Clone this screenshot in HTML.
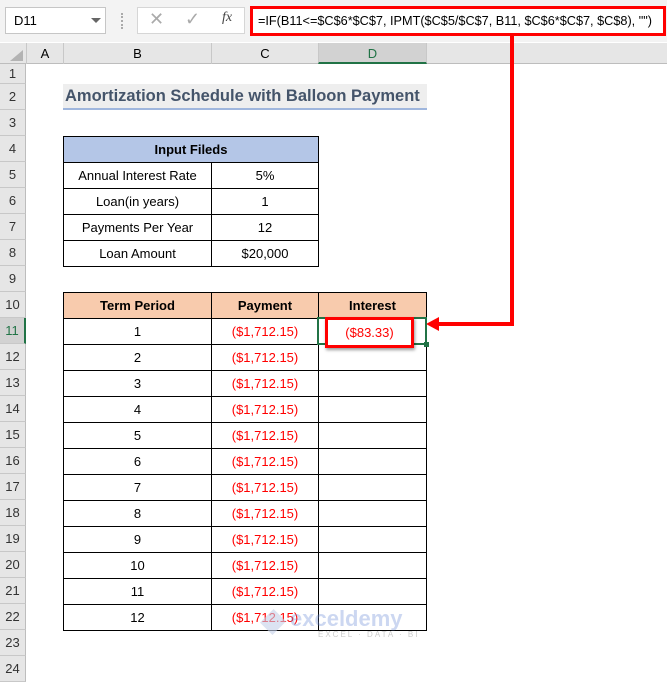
<!DOCTYPE html><html><head><style>
body{margin:0;width:667px;height:656px;background:#fff;position:relative;overflow:hidden;font-family:"Liberation Sans",sans-serif;font-size:13px;color:#000}
.a{position:absolute;box-sizing:border-box}
.rh{position:absolute;left:0;width:26px;background:#e6e6e6;border-bottom:1px solid #c8c8c8;border-right:1px solid #bdbdbd;text-align:center;font-size:13px;color:#333;box-sizing:border-box}
.c{position:absolute;box-sizing:border-box;border:1px solid #000;text-align:center;font-size:13px}
.red{color:#ff0000}
</style></head><body>
<div class="a" style="left:0;top:0;width:667px;height:42px;background:#f3f3f3"></div>
<div class="a" style="left:5px;top:7px;width:101px;height:27px;background:#fff;border:1px solid #c6c6c6;padding:5px 0 0 8px;font-size:13px">D11</div>
<div class="a" style="left:91px;top:18px;border-left:5px solid transparent;border-right:5px solid transparent;border-top:5px solid #666"></div>
<div class="a" style="left:121px;top:13px;width:2px;height:16px;border-left:2px dotted #aaa"></div>
<div class="a" style="left:137px;top:7px;width:108px;height:27px;background:#fff;border:1px solid #d6d6d6"></div>
<div class="a" style="left:149px;top:9px;font-size:18px;color:#aaa">✕</div>
<div class="a" style="left:185px;top:9px;font-size:18px;color:#aaa">✓</div>
<div class="a" style="left:222px;top:10px;font-size:14px;font-style:italic;font-family:'Liberation Serif',serif;color:#444">fx</div>
<div class="a" style="left:250px;top:6px;width:416px;height:30px;background:#fff;border:3px solid #ff0000;padding:5px 0 0 5px;font-size:12.7px;white-space:nowrap;overflow:hidden">=IF(B11&lt;=$C$6*$C$7, IPMT($C$5/$C$7, B11, $C$6*$C$7, $C$8), "")</div>
<div class="a" style="left:0;top:43px;width:667px;height:21px;background:#e6e6e6;border-bottom:1px solid #bdbdbd"></div>
<div class="a" style="left:10px;top:50px;border-left:13px solid transparent;border-bottom:11px solid #b3b3b3"></div>
<div class="a" style="left:26px;top:43px;width:37px;height:21px;border-left:1px solid #c8c8c8;text-align:center;padding-top:3px">A</div>
<div class="a" style="left:63px;top:43px;width:148px;height:21px;border-left:1px solid #c8c8c8;text-align:center;padding-top:3px">B</div>
<div class="a" style="left:211px;top:43px;width:107px;height:21px;border-left:1px solid #c8c8c8;text-align:center;padding-top:3px">C</div>
<div class="a" style="left:318px;top:43px;width:109px;height:21px;border-left:1px solid #c8c8c8;border-right:1px solid #c8c8c8;background:#d2d2d2;border-bottom:2px solid #217346;text-align:center;padding-top:3px;color:#217346">D</div>
<div class="a" style="left:0;top:64px;width:26px;height:592px;background:#e6e6e6;border-right:1px solid #bdbdbd"></div>
<div class="rh" style="top:64px;height:20px;line-height:20px">1</div>
<div id="rows"></div>
<div class="a" style="left:63px;top:84px;width:364px;height:26px;background:#eeeeee;border-bottom:2px solid #9fb6dd;color:#44546a;font-weight:bold;font-size:16.5px;padding:3px 0 0 2px">Amortization Schedule with Balloon Payment</div>
<div id="t"></div>
<div class="a" style="left:510px;top:36px;width:4px;height:290px;background:#ff0000"></div>
<div class="a" style="left:436px;top:322px;width:78px;height:4px;background:#ff0000"></div>
<div class="a" style="left:426px;top:317px;border-top:7px solid transparent;border-bottom:7px solid transparent;border-right:13px solid #ff0000"></div>
<div class="a" style="left:317px;top:317px;width:110px;height:28px;border:2px solid #217346"></div>
<div class="a" style="left:424px;top:342px;width:5px;height:5px;background:#217346"></div>
<div class="a" style="left:325px;top:317px;width:89px;height:31px;border:3px solid #ff0000;box-shadow:1px 2px 3px rgba(0,0,0,.4);background:#fff;text-align:center;padding-top:5px;color:#ff0000">($83.33)</div>
<div class="a" style="left:262px;top:610px;width:22px;height:24px;background:#c5d0ea;opacity:.6;transform:rotate(45deg) scale(.8)"></div>
<div class="a" style="left:290px;top:606px;opacity:.35;color:#6f8fd8;font-weight:bold;font-size:22px;white-space:nowrap">exceldemy</div>
<div class="a" style="left:318px;top:630px;opacity:.5;color:#999;font-size:8px;letter-spacing:2px;white-space:nowrap">EXCEL · DATA · BI</div>
<script>
let h='';for(let k=2;k<=24;k++){let t=84+(k-2)*26;h+=`<div class="rh" style="top:${t}px;height:26px;line-height:26px;${k==11?'background:#d2d2d2;color:#217346;border-right:2px solid #217346':''}">${k}</div>`}
document.getElementById('rows').innerHTML=h;
let s='';const T=k=>84+(k-2)*26;
const inp=[["Annual Interest Rate","5%"],["Loan(in years)","1"],["Payments Per Year","12"],["Loan Amount","$20,000"]];
s+=`<div class="c" style="left:63px;top:${T(4)}px;width:256px;height:27px;background:#b4c6e7;font-weight:bold;line-height:25px">Input Fileds</div>`;
inp.forEach((r,i)=>{let t=T(5+i);s+=`<div class="c" style="left:63px;top:${t}px;width:149px;height:27px;line-height:25px">${r[0]}</div><div class="c" style="left:211px;top:${t}px;width:108px;height:27px;line-height:25px">${r[1]}</div>`});
let t=T(10);s+=`<div class="c" style="left:63px;top:${t}px;width:149px;height:27px;line-height:25px;background:#f8cbad;font-weight:bold">Term Period</div><div class="c" style="left:211px;top:${t}px;width:108px;height:27px;line-height:25px;background:#f8cbad;font-weight:bold">Payment</div><div class="c" style="left:318px;top:${t}px;width:109px;height:27px;line-height:25px;background:#f8cbad;font-weight:bold">Interest</div>`;
for(let i=1;i<=12;i++){t=T(10+i);s+=`<div class="c" style="left:63px;top:${t}px;width:149px;height:27px;line-height:25px">${i}</div><div class="c red" style="left:211px;top:${t}px;width:108px;height:27px;line-height:25px">($1,712.15)</div><div class="c" style="left:318px;top:${t}px;width:109px;height:27px"></div>`}
document.getElementById('t').innerHTML=s;
</script>
</body></html>
